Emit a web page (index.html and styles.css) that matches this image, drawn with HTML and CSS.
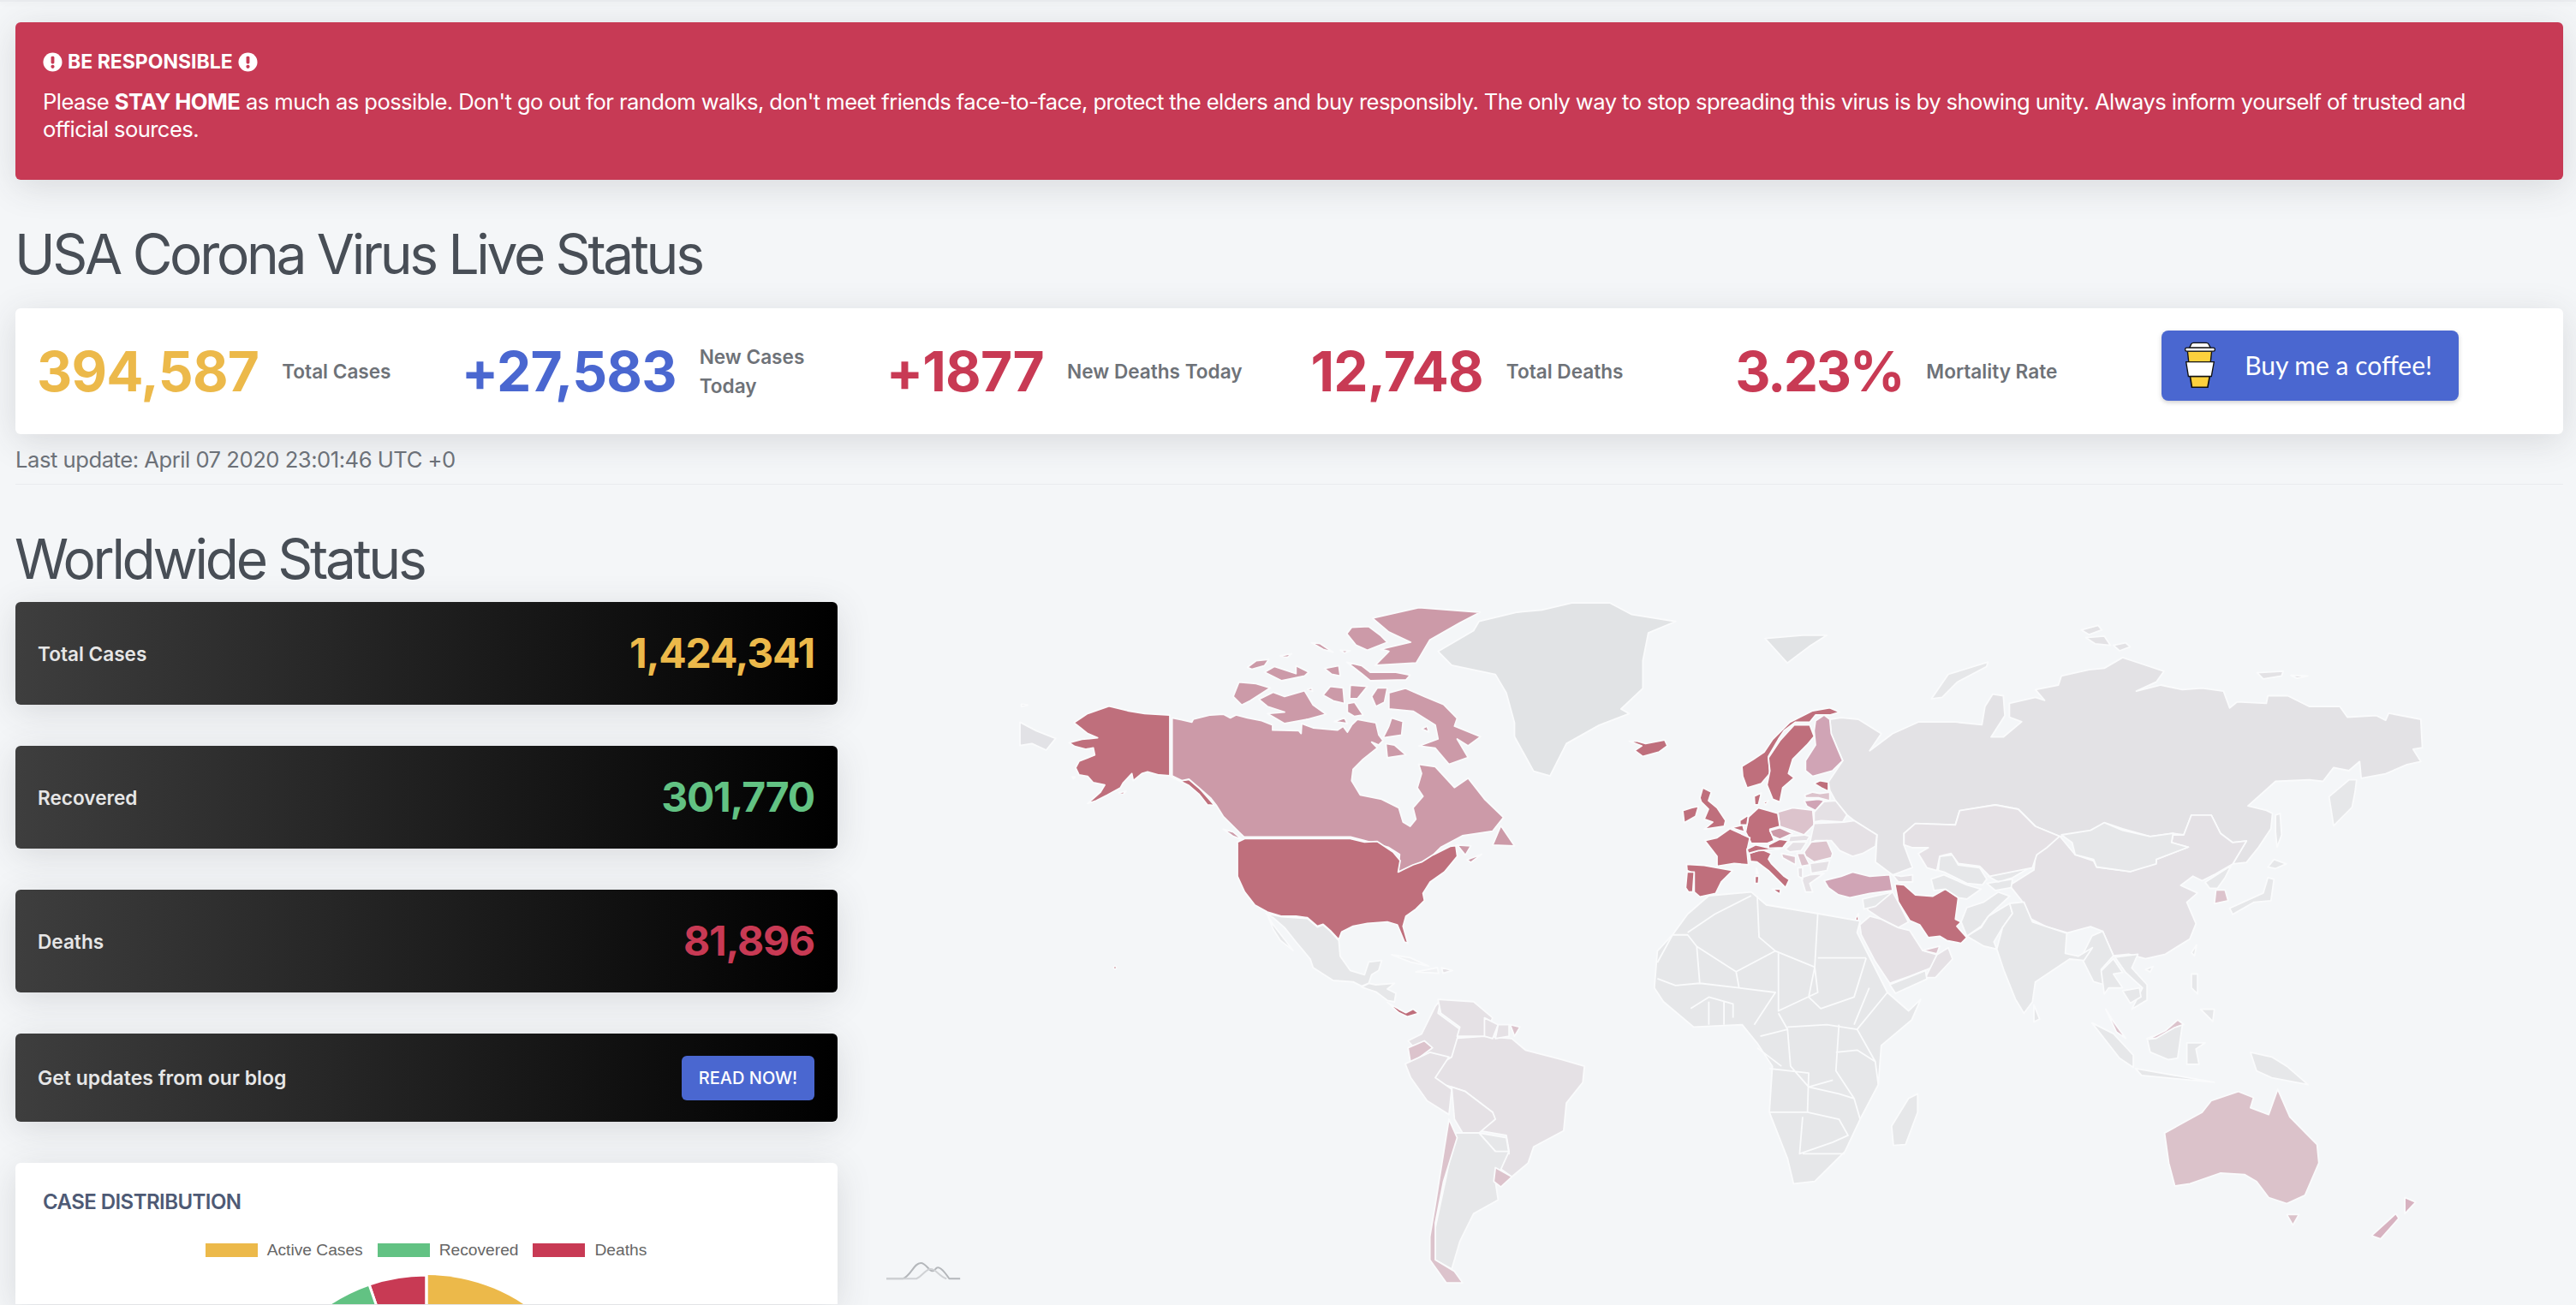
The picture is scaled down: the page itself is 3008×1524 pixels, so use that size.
FILE: index.html
```html
<!DOCTYPE html>
<html lang="en">
<head>
<meta charset="utf-8">
<title>Corona Virus Live Status</title>
<link rel="stylesheet" href="styles.css">
</head>
<body>
<div class="topline"></div>
<main class="page">
  <section class="alert">
    <h4 class="alert-title">
      <svg class="ex-icon" viewBox="0 0 24 24"><circle cx="12" cy="12" r="11.5" fill="#fff"/><rect x="10" y="5" width="4" height="9" rx="1.5" fill="#c73a55"/><circle cx="12" cy="17.5" r="2.2" fill="#c73a55"/></svg>
      <span>BE RESPONSIBLE</span>
      <svg class="ex-icon" viewBox="0 0 24 24"><circle cx="12" cy="12" r="11.5" fill="#fff"/><rect x="10" y="5" width="4" height="9" rx="1.5" fill="#c73a55"/><circle cx="12" cy="17.5" r="2.2" fill="#c73a55"/></svg>
    </h4>
    <p class="alert-body">Please <b>STAY HOME</b> as much as possible. Don't go out for random walks, don't meet friends face-to-face, protect the elders and buy responsibly. The only way to stop spreading this virus is by showing unity. Always inform yourself of trusted and official sources.</p>
  </section>

  <h1 class="title usa-title">USA Corona Virus Live Status</h1>
  <section class="stats">
    <div class="stat"><span class="num yellow">394,587</span><span class="lbl">Total Cases</span></div>
    <div class="stat"><span class="num blue">+27,583</span><span class="lbl">New Cases Today</span></div>
    <div class="stat"><span class="num red">+1877</span><span class="lbl">New Deaths Today</span></div>
    <div class="stat"><span class="num red">12,748</span><span class="lbl">Total Deaths</span></div>
    <div class="stat"><span class="num red pct">3.23%</span><span class="lbl">Mortality Rate</span></div>
    <div class="stat stat-btn">
      <a class="coffee" href="#">
        <svg class="cup" viewBox="150 85 110 160">
          <path d="M170,106 L176,93 Q178,89 184,89 L228,89 Q234,89 236,93 L243,106Z" fill="#fff" stroke="#111" stroke-width="4"/>
          <path d="M163,118 L247,118 L243,155 L167,155Z" fill="#fdd13d" stroke="#111" stroke-width="4"/>
          <path d="M172,205 L240,205 L233,243 L178,243Z" fill="#fdd13d" stroke="#111" stroke-width="5"/>
          <path d="M158,155 L255,155 L246,205 L166,205Z" fill="#fff" stroke="#111" stroke-width="4"/>
          <rect x="155" y="106" width="103" height="12" rx="5" fill="#fff" stroke="#111" stroke-width="4"/>
        </svg>
        <span>Buy me a coffee!</span>
      </a>
    </div>
  </section>
  <p class="updated">Last update: April 07 2020 23:01:46 UTC +0</p>
  <hr class="rule">

  <h1 class="title world-title">Worldwide Status</h1>
  <section class="world">
    <div class="side">
      <div class="dark-card"><span class="dc-label">Total Cases</span><span class="dc-value yellow">1,424,341</span></div>
      <div class="dark-card"><span class="dc-label">Recovered</span><span class="dc-value green">301,770</span></div>
      <div class="dark-card"><span class="dc-label">Deaths</span><span class="dc-value red">81,896</span></div>
      <div class="dark-card blog"><span class="dc-label">Get updates from our blog</span><a class="read" href="#">READ NOW!</a></div>
      <div class="chart-card">
        <h6 class="chart-title">CASE DISTRIBUTION</h6>
        <div class="legend">
          <span class="swatch bg-yellow"></span><span class="leg-text">Active Cases</span>
          <span class="swatch bg-green"></span><span class="leg-text">Recovered</span>
          <span class="swatch bg-red"></span><span class="leg-text">Deaths</span>
        </div>
        <svg class="pie" viewBox="0 0 424 424">
          <circle cx="212" cy="212" r="205" fill="#ecb94a"/>
          <path d="M212,212 L212,7 A205,205 0 0 0 145,18Z" fill="#c83a54" stroke="#fff" stroke-width="3"/>
          <path d="M212,212 L145,18 A205,205 0 0 0 80,55Z" fill="#62c283" stroke="#fff" stroke-width="3"/>
          <path d="M212,212 L212,7" stroke="#fff" stroke-width="3"/>
        </svg>
      </div>
    </div>

    <svg class="map" viewBox="1000 703 1993 821">
      <!-- zoom group A: North America west -->
      <g transform="translate(1180 690) scale(.33333)">
        <path class="c-gr" d="M33,460 L90,490 L158,517 L125,558 L75,535 L33,542Z"/>
        <path class="c-gr" d="M38,397 L60,400 L38,405Z"/>
        <path class="c-usa" d="M222,462 L270,430 L345,404 L410,420 L470,430 L558,435 L558,648 L520,645 L480,634 L460,640 L430,665 L425,640 L395,672 L385,690 L340,715 L300,735 L270,745 L315,705 L330,680 L290,672 L270,650 L240,645 L228,620 L240,597 L295,575 L290,550 L265,555 L225,545 L205,532 L250,520 L305,515 L270,500 L245,480Z"/>
        <path class="c-usa" d="M560,650 L600,665 L625,660 L660,690 L700,735 L715,752 L690,750 L660,712 L625,682Z"/>
        <path class="c-usa" d="M380,708 L405,702 L395,712Z M216,652 L226,652 L220,658Z"/>
        <path class="c-can" d="M566,445 L600,452 L635,460 L640,450 L700,435 L745,432 L770,445 L790,435 L830,445 L880,455 L918,470 L918,488 L1010,490 L1018,500 L1020,465 L1060,480 L1145,488 L1165,475 L1180,495 L1195,470 L1215,450 L1255,458 L1280,462 L1290,505 L1305,525 L1290,540 L1265,530 L1285,550 L1235,590 L1200,625 L1195,665 L1225,715 L1300,730 L1360,760 L1375,810 L1400,825 L1420,800 L1410,760 L1445,720 L1425,690 L1440,640 L1430,608 L1488,616 L1555,689 L1603,656 L1660,729 L1727,794 L1689,842 L1583,858 L1507,899 L1450,955 L1383,984 L1358,984 L1363,923 L1325,899 L1240,875 L1191,862 L818,862 L800,845 L745,790 L720,750 L700,725 L660,690 L625,660 L600,665 L566,648Z"/>
        <path class="c-can" d="M745,835 L780,845 L812,872 L780,860Z"/>
        <path class="c-can" d="M830,268 L860,245 L905,240 L890,262 L845,275Z"/>
        <path class="c-can" d="M890,285 L925,265 L1000,290 L1000,262 L1045,285 L1030,298 L950,315Z"/>
        <path class="c-can" d="M1178,250 L1230,262 L1260,285 L1350,285 L1400,295 L1385,312 L1260,315 L1230,290Z"/>
        <path class="c-can" d="M1100,272 L1150,262 L1155,298 L1125,292Z"/>
        <path class="c-can" d="M780,370 L800,320 L860,325 L910,340 L840,385 L810,400Z"/>
        <path class="c-can" d="M870,380 L920,355 L960,370 L1030,350 L1060,400 L1105,432 L1040,450 L960,465 L900,430 L960,425 L900,405Z"/>
        <path class="c-can" d="M1095,365 L1120,335 L1165,340 L1170,395 L1130,385Z"/>
        <path class="c-can" d="M1190,330 L1250,335 L1215,378 L1188,378Z"/>
        <path class="c-can" d="M1265,370 L1285,340 L1320,340 L1310,390 L1280,405Z"/>
        <path class="c-can" d="M1180,395 L1205,390 L1235,435 L1205,440 L1180,425Z"/>
        <path class="c-can" d="M1135,458 L1170,445 L1180,465Z"/>
        <path class="c-can" d="M1040,345 L1055,340 L1058,352Z M1055,182 L1085,185 L1130,215 L1095,205Z M1155,208 L1190,210 L1170,218Z M945,228 L985,220 L970,233Z"/>
        <path class="c-can" d="M1315,535 L1345,540 L1385,575 L1320,585Z"/>
        <path class="c-can" d="M1335,445 L1375,458 L1370,505 L1305,515 L1325,475Z"/>
        <path class="c-can" d="M1178,150 L1195,128 L1255,125 L1295,155 L1320,180 L1250,208 L1210,190Z"/>
        <path class="c-usa" d="M820,868 L1190,868 L1240,880 L1285,878 L1340,915 L1365,945 L1358,985 L1410,960 L1440,950 L1480,925 L1540,895 L1560,893 L1565,930 L1520,985 L1470,1020 L1445,1060 L1450,1085 L1420,1115 L1385,1140 L1375,1175 L1392,1235 L1380,1230 L1355,1170 L1320,1160 L1250,1165 L1200,1175 L1160,1195 L1150,1222 L1120,1190 L1095,1168 L1075,1175 L1040,1145 L1000,1140 L950,1140 L900,1125 L855,1100 L820,1055 L795,1000 L795,950 L795,880Z"/>
        <circle class="c-usa" cx="366" cy="1320" r="5"/>
        <path class="c-af" d="M895,1130 L950,1142 L1040,1148 L1075,1178 L1095,1170 L1120,1192 L1150,1225 L1155,1280 L1190,1330 L1240,1345 L1255,1300 L1300,1295 L1290,1330 L1265,1345 L1255,1375 L1230,1385 L1200,1370 L1130,1365 L1060,1320 L1050,1290 L1000,1230 L960,1180 L920,1145Z"/>
        <path class="c-af" d="M900,1135 L920,1170 L990,1260 L945,1225 L920,1185Z"/>
        <path class="c-af" d="M1230,1388 L1255,1375 L1280,1380 L1345,1375 L1320,1395 L1350,1410 L1345,1440 L1320,1435 L1280,1405 L1250,1395Z"/>
        <path class="c-usa" d="M1320,1442 L1360,1465 L1385,1478 L1410,1465 L1430,1480 L1390,1492 L1360,1478Z"/>
        <path class="c-br" d="M1510,1320 L1548,1330 L1515,1340Z"/>
        <path class="c-pale" d="M1335,1275 L1400,1285 L1465,1315 L1400,1300Z M1420,1335 L1495,1320 L1500,1340Z"/>
      </g>

      <!-- zoom group B: Arctic, Greenland, Atlantic, South America -->
      <g transform="translate(1000 680) scale(.63776 .53821)">
        <path class="c-gl" d="M1065,150 L1130,105 L1140,85 L1210,65 L1255,60 L1310,45 L1380,45 L1420,70 L1500,85 L1450,110 L1440,170 L1440,230 L1400,275 L1415,285 L1360,310 L1300,350 L1270,420 L1240,410 L1205,335 L1205,305 L1190,240 L1170,200 L1090,180Z"/>
        <path class="c-can" d="M945,78 L1030,55 L1142,65 L1105,88 L1050,125 L1025,175 L950,180 L975,150 L960,145 L1015,130 L975,108Z"/>
        <path class="c-can" d="M975,240 L1005,230 L1040,248 L1075,265 L1100,295 L1095,312 L1143,335 L1120,355 L1100,340 L1120,380 L1085,395 L1060,360 L1030,355 L1065,340 L1060,310 L1020,280 L975,275Z"/>
        <path class="c-can" d="M1180,528 L1205,572 L1165,570Z M1100,570 L1125,572 L1115,592Z M1118,602 L1145,590 L1125,608Z M1035,318 L1045,312 L1048,325Z"/>
        <path class="c-usa" d="M1415,345 L1430,345 L1445,350 L1480,342 L1485,355 L1470,368 L1440,378 L1425,365 L1438,355Z"/>
        <path class="c-br" d="M1090,990 L1150,985 L1200,990 L1225,1015 L1290,1035 L1333,1050 L1330,1085 L1300,1130 L1295,1190 L1240,1225 L1230,1260 L1200,1290 L1170,1265 L1195,1235 L1190,1200 L1140,1190 L1165,1150 L1115,1105 L1090,1095 L1060,1085 L1058,1055 L1085,1030Z"/>
        <path class="c-br" d="M1035,980 L1060,920 L1070,905 L1065,935 L1105,970 L1090,1030 L1055,1055 L1010,995Z"/>
        <path class="c-br" d="M1065,905 L1130,910 L1165,945 L1150,985 L1100,985 L1105,965 L1070,935Z"/>
        <path class="c-br" d="M1150,945 L1175,960 L1165,990 L1150,985Z M1175,960 L1195,960 L1195,985 L1170,990Z"/>
        <path class="c-mid" d="M1197,960 L1215,965 L1205,985Z"/>
        <path class="c-mid" d="M1010,1010 L1040,995 L1055,1010 L1015,1045Z"/>
        <path class="c-br" d="M1005,1045 L1050,1020 L1085,1030 L1060,1075 L1090,1100 L1085,1155 L1045,1125 L1015,1075Z"/>
        <path class="c-br" d="M1090,1095 L1115,1105 L1165,1150 L1170,1165 L1140,1195 L1110,1195 L1095,1165Z"/>
        <path class="c-af" d="M1140,1195 L1190,1205 L1195,1240 L1170,1235Z"/>
        <path class="c-af" d="M1095,1195 L1140,1195 L1170,1235 L1195,1235 L1170,1300 L1175,1340 L1130,1370 L1105,1430 L1090,1490 L1060,1470 L1060,1400 L1080,1290Z"/>
        <path class="c-mid" d="M1085,1165 L1100,1205 L1075,1300 L1060,1390 L1060,1470 L1095,1495 L1110,1520 L1080,1520 L1050,1470 L1050,1420 L1060,1350Z"/>
        <path class="c-mid" d="M1170,1270 L1200,1290 L1180,1312 L1167,1300Z"/>
        <path class="logo" d="M55,1511 L85,1511 C100,1505 105,1477 118,1477 C130,1477 135,1505 145,1490 C150,1482 158,1490 170,1511 L190,1511"/>
        <path class="logo-b" d="M55,1511 L110,1511 C122,1505 125,1492 135,1490 C145,1488 150,1505 165,1511"/>
      </g>

      <!-- zoom group C: Russia, China, East Asia -->
      <g transform="translate(2300 700) scale(.35714)">
        <path class="c-ru" d="M-420,387 L-364,392 L-289,439 L-327,495 L-252,439 L-168,401 L-47,401 L40,410 L50,350 L75,310 L110,315 L115,380 L70,450 L110,450 L170,400 L130,385 L130,340 L215,320 L245,330 L215,295 L290,280 L300,250 L390,230 L440,225 L500,190 L560,210 L635,235 L610,270 L545,300 L625,280 L695,295 L760,290 L830,300 L850,355 L875,335 L970,340 L975,315 L1040,315 L1110,350 L1210,350 L1235,385 L1330,380 L1360,395 L1370,372 L1475,392 L1480,485 L1450,490 L1475,530 L1430,540 L1360,570 L1280,585 L1275,530 L1240,560 L1190,550 L1155,595 L1110,590 L1000,595 L910,675 L970,690 L990,700 L985,750 L945,810 L905,860 L860,865 L905,790 L860,795 L820,765 L790,705 L725,705 L700,770 L665,765 L590,775 L500,750 L440,730 L395,760 L294,775 L215,742 L159,686 L84,672 L-33,691 L-47,737 L-177,733 L-215,765 L-215,803 L-187,877 L-252,901 L-308,859 L-303,770 L-378,723 L-401,705 L-439,658 L-457,625 L-462,597 L-415,527 L-429,495 L-453,439 L-457,392Z"/>
        <path class="c-af" d="M-125,325 L-70,245 L60,205 L55,220 L-40,270 L-90,320Z"/>
        <path class="c-gl" d="M-669,128 L-546,117 L-467,117 L-526,155 L-596,208Z"/>
        <path class="c-ru" d="M365,100 L420,85 L432,100 L390,115Z M380,125 L440,120 L460,150 L410,145Z M470,150 L510,142 L525,155 L490,168Z M940,240 L1025,235 L1020,250 L960,260Z M1050,248 L1105,250 L1070,258Z"/>
        <path class="c-af" d="M1175,645 L1240,590 L1265,590 L1260,630 L1250,680 L1190,740Z"/>
        <path class="c-af" d="M1000,705 L1015,700 L1020,770 L1005,810 L1000,760Z"/>
        <path class="c-af" d="M850,1010 L960,960 L975,910 L995,915 L985,985 L930,990 L860,1030Z M995,850 L1035,865 L1000,880 L975,875Z"/>
        <path class="c-cn" d="M130,935 L210,885 L215,840 L245,800 L295,775 L345,835 L405,855 L415,875 L525,890 L610,860 L610,850 L715,810 L660,795 L665,770 L700,770 L725,705 L790,705 L820,765 L860,795 L905,790 L860,865 L800,900 L760,920 L730,905 L690,935 L745,960 L710,990 L740,1060 L720,1110 L640,1160 L575,1175 L520,1160 L470,1165 L435,1085 L395,1070 L320,1090 L250,1070 L190,1040 L170,985Z"/>
        <path class="c-af" d="M300,770 L395,755 L440,730 L500,755 L590,775 L665,765 L660,795 L715,810 L610,850 L610,865 L525,890 L415,875 L405,850 L345,835 L335,795Z"/>
        <path class="c-af" d="M770,925 L855,870 L835,910 L810,945 L785,945Z"/>
        <path class="c-mid" d="M805,950 L835,950 L845,985 L800,995Z"/>
        <path class="c-af" d="M725,1155 L742,1130 L735,1165Z M575,1210 L600,1200 L590,1218Z"/>
        <path class="c-af" d="M210,1065 L310,1090 L305,1115 L240,1095Z"/>
        <path class="c-af" d="M365,1170 L400,1100 L435,1085 L470,1165 L430,1210 L440,1260 L405,1250Z"/>
        <path class="c-af" d="M430,1215 L470,1175 L500,1220 L470,1225 L500,1270 L455,1270 L440,1290Z"/>
        <path class="c-af" d="M475,1170 L550,1160 L530,1205 L580,1260 L580,1310 L530,1340 L565,1270 L510,1220Z"/>
        <path class="c-af" d="M500,1280 L555,1270 L560,1300 L525,1320Z"/>
        <path class="c-mid" d="M445,1340 L470,1380 L510,1435 L480,1415Z"/>
        <path class="c-af" d="M400,1385 L470,1420 L535,1490 L535,1530 L490,1500Z"/>
        <path class="c-af" d="M580,1435 L640,1415 L690,1380 L695,1395 L680,1500 L650,1505 L590,1480Z"/>
        <path class="c-mid" d="M585,1438 L640,1410 L680,1375 L700,1390 L670,1400 L610,1435Z"/>
        <path class="c-af" d="M710,1450 L770,1450 L740,1470 L750,1520 L710,1520Z"/>
        <path class="c-af" d="M725,1225 L745,1225 L745,1290 L725,1270Z M755,1340 L800,1340 L795,1380Z"/>
      </g>

      <!-- zoom group D: Europe, Middle East, Central Asia, India -->
      <g transform="translate(1950 800) scale(.33333)">
        <path class="c-usa" d="M252,285 L290,262 L330,235 L360,190 L420,130 L500,90 L560,80 L595,95 L560,105 L510,105 L490,130 L440,130 L400,160 L380,190 L345,250 L350,310 L320,345 L270,360 L255,320Z"/>
        <path class="c-usa" d="M345,255 L385,195 L435,140 L490,140 L505,180 L480,210 L430,260 L415,310 L435,325 L395,360 L385,410 L360,400 L340,350 L350,300Z"/>
        <path class="c-tr" d="M510,125 L540,105 L560,120 L565,170 L590,230 L605,265 L570,300 L500,320 L475,300 L475,265 L510,210 L505,160Z"/>
        <path class="c-usa" d="M295,390 L320,378 L310,420 L297,420Z M330,410 L345,405 L335,420Z"/>
        <path class="c-usa" d="M505,345 L525,335 L555,340 L555,372 L530,360Z"/>
        <path class="c-mid" d="M472,385 L500,375 L525,380 L560,375 L560,405 L520,395 L475,395Z"/>
        <path class="c-tr" d="M470,405 L520,400 L540,405 L510,440 L480,425Z"/>
        <path class="c-br" d="M505,445 L540,408 L580,405 L620,455 L605,480 L530,475 L505,480Z"/>
        <path class="c-mid" d="M378,445 L430,430 L500,438 L505,490 L470,525 L430,510 L385,495Z"/>
        <path class="c-usa" d="M275,462 L310,430 L345,440 L378,450 L385,495 L350,505 L365,545 L340,555 L285,555 L265,515Z"/>
        <path class="c-usa" d="M245,475 L275,455 L270,490 L245,490Z M215,500 L255,490 L262,515Z"/>
        <path class="c-usa" d="M122,545 L165,535 L210,503 L280,535 L270,580 L275,630 L225,625 L165,635 L165,600Z"/>
        <path class="c-usa" d="M105,395 L115,360 L145,375 L135,405 L165,430 L195,475 L190,495 L120,505 L150,480 L120,470 L135,435 L110,410Z"/>
        <path class="c-usa" d="M45,440 L75,430 L100,425 L90,460 L50,482Z"/>
        <path class="c-usa" d="M58,628 L120,632 L220,650 L180,690 L160,730 L105,742 L85,725 L85,660 L60,650Z"/>
        <path class="c-usa" d="M60,655 L85,655 L80,725 L65,725 L55,710Z"/>
        <path class="c-usa" d="M278,590 L320,575 L355,590 L345,610 L355,625 L400,670 L418,682 L405,710 L385,690 L345,650 L305,620 L282,618Z"/>
        <path class="c-usa" d="M270,575 L300,560 L345,570 L405,565 L380,575 L310,580 L275,590Z"/>
        <path class="c-can" d="M350,510 L385,500 L430,520 L385,540 L360,530Z"/>
        <path class="c-usa" d="M345,560 L385,540 L415,545 L395,570 L345,572Z"/>
        <path class="c-usa" d="M298,670 L312,670 L310,695 L298,695Z M303,642 L309,660 L303,660Z M358,715 L388,715 L385,733Z"/>
        <path class="c-br" d="M495,530 L505,485 L610,480 L645,475 L725,525 L720,565 L675,590 L640,600 L595,580 L565,545 L510,545 L490,555Z"/>
        <path class="c-br" d="M420,530 L470,525 L490,530 L480,545 L415,550Z M405,575 L430,550 L480,550 L460,580 L420,585Z"/>
        <path class="c-mid" d="M470,585 L495,550 L550,545 L570,590 L565,605 L505,620 L475,600Z"/>
        <path class="c-br" d="M490,625 L560,615 L550,650 L495,660Z"/>
        <path class="c-mid" d="M445,590 L470,590 L490,630 L460,635Z M390,590 L440,600 L440,630 L395,605Z"/>
        <path class="c-br" d="M460,675 L490,665 L540,660 L490,695 L500,725 L475,725Z M448,640 L465,640 L465,680 L450,670Z"/>
        <path class="c-tr" d="M540,685 L600,670 L640,655 L700,670 L770,665 L780,720 L700,730 L630,745 L590,735 L555,710Z"/>
        <path class="c-br" d="M780,665 L810,670 L850,665 L850,690 L800,690Z"/>
        <path class="c-usa" d="M788,697 L820,700 L860,735 L920,740 L965,715 L1010,745 L1000,820 L1020,830 L1005,845 L1040,885 L1020,905 L970,895 L945,880 L905,885 L875,840 L840,825 L800,760Z"/>
        <path class="c-usa" d="M650,820 L660,800 L660,835Z"/>
        <path class="c-br" d="M680,760 L780,725 L805,770 L835,830 L800,850 L740,820 L695,790Z"/>
        <path class="c-af" d="M675,750 L780,725 L720,775 L680,785Z"/>
        <path class="c-br" d="M665,840 L700,810 L740,820 L800,850 L840,860 L885,930 L935,945 L930,985 L840,1020 L770,1045 L720,970 L670,875Z"/>
        <path class="c-br" d="M935,945 L975,920 L990,960 L930,1025 L895,1025Z"/>
        <path class="c-af" d="M770,1050 L895,1000 L900,1030 L790,1080Z"/>
        <path class="c-mid" d="M885,930 L945,915 L935,942Z"/>
        <path class="c-af" d="M1040,880 L1090,850 L1115,810 L1190,765 L1200,800 L1165,850 L1135,900 L1145,925 L1100,915Z"/>
        <path class="c-af" d="M1020,830 L1040,780 L1100,760 L1150,725 L1190,740 L1115,810 L1090,845 L1040,880Z"/>
        <path class="c-af" d="M915,680 L960,665 L1040,700 L1090,715 L1040,750 L1010,745 L965,715 L925,720Z"/>
        <path class="c-af" d="M945,600 L990,595 L1010,630 L1085,640 L1110,680 L1095,700 L1040,695 L960,655 L940,650Z"/>
        <path class="c-af" d="M1115,670 L1260,640 L1200,675 L1150,690Z M1110,695 L1200,680 L1195,710 L1140,720Z"/>
        <path class="c-br" d="M820,520 L860,485 L1000,490 L1015,440 L1140,420 L1220,435 L1280,495 L1365,530 L1320,570 L1285,595 L1270,640 L1120,670 L1085,635 L1010,625 L985,590 L945,600 L935,650 L900,640 L870,590 L905,570 L850,570 L820,560Z"/>
        <path class="c-af" d="M1190,765 L1240,760 L1270,830 L1390,870 L1385,940 L1430,950 L1480,920 L1450,965 L1400,960 L1280,1040 L1270,1110 L1240,1150 L1210,1100 L1170,1000 L1145,925 L1165,850 L1200,800Z"/>
        <path class="c-af" d="M1275,1120 L1295,1170 L1275,1180Z"/>
      </g>

      <!-- zoom group E: Africa, Oceania -->
      <g transform="translate(1900 680) scale(.70671 .53821)">
        <path class="c-af" d="M100,720 L135,680 L205,672 L230,700 L320,720 L385,735 L380,760 L430,890 L465,930 L485,905 L470,950 L420,1005 L415,1090 L385,1165 L360,1235 L310,1300 L275,1305 L265,1250 L235,1150 L240,1050 L215,1000 L190,960 L110,965 L60,910 L45,880 L50,800 L75,765Z"/>
        <path class="seam" d="M100,760 L145,720 L205,680 M50,825 L75,765 L100,765 L115,790 L120,870 M115,790 L180,845 L245,800 L218,770 L215,680 M245,800 L310,835 L315,720 M315,815 L395,815 M310,835 L315,890 L250,930 L250,805 M180,845 L185,880 L120,870 L80,875 L50,860 M185,880 L245,890 L210,960 M250,935 L265,970 L220,985 M265,965 L330,960 L380,970 L430,890 M310,835 L300,900 L320,925 L375,900 L395,815 M375,960 L400,880 M380,970 L410,1040 L415,1090 M345,1020 L380,1015 L410,1040 M350,960 L345,1060 L375,1120 M265,970 L270,1050 L300,1095 L340,1080 M215,1010 L255,1050 M235,1055 L300,1065 L298,1150 L235,1150 M300,1095 L350,1110 L375,1120 L385,1165 M298,1150 L350,1165 L365,1200 L340,1215 L285,1240 L290,1160 M360,1240 L290,1240 M105,925 L135,900 L175,915 L175,945 M135,910 L135,960 M160,910 L160,960"/>
        <path class="c-af" d="M465,1120 L480,1110 L480,1150 L460,1220 L440,1222 L437,1180Z"/>
        <path class="c-af" d="M1030,1020 L1065,1030 L1090,1050 L1125,1090 L1065,1075 L1040,1060Z"/>
        <path class="c-af" d="M840,1055 L940,1078 L970,1085 L850,1070Z"/>
        <path class="c-au" d="M888,1195 L950,1150 L965,1125 L1010,1105 L1035,1118 L1030,1140 L1060,1155 L1075,1100 L1095,1160 L1140,1220 L1143,1260 L1120,1330 L1090,1348 L1060,1335 L1040,1300 L1020,1285 L980,1282 L930,1305 L905,1310 L895,1260Z"/>
        <path class="c-au" d="M1090,1372 L1110,1372 L1100,1395Z"/>
        <path class="c-nz" d="M1285,1335 L1303,1345 L1285,1370Z M1270,1370 L1275,1380 L1245,1425 L1230,1418Z"/>
      </g>
    </svg>
  </section>
</main>
</body>
</html>
```
FILE: styles.css
```css
* { box-sizing: border-box; }
html, body { margin: 0; height: 100%; }
body {
  height: 100vh;
  overflow: hidden;
  background: #f4f6f8;
  font-family: Inter, "Liberation Sans", sans-serif;
  color: #4a5058;
}
.topline { height: 2px; background: #e9ebee; box-shadow: 0 1px 6px rgba(58,59,69,.08); }
.page { padding: 24px 15px 0 18px; }

.alert {
  height: 184px;
  padding: 32px 32px 0;
  background: #c73a55;
  border-radius: 6px;
  color: #fff;
  box-shadow: 0 8px 40px rgba(58,59,69,.15);
}
.alert-title {
  display: flex;
  align-items: center;
  gap: 6px;
  height: 28px;
  margin: 0 0 17px;
  font-size: 23px;
  font-weight: 700;
  line-height: 28px;
}
.ex-icon { width: 23px; height: 23px; flex: none; }
.alert-body { margin: 0; font-size: 25.6px; line-height: 32px; letter-spacing: -0.57px; }
.alert-body b { font-weight: 700; }

.title { margin: 0 0 0 -1px; font-size: 64px; font-weight: 400; line-height: 77px; color: #484e56; letter-spacing: -3.3px; }
.usa-title { margin-top: 48px; margin-bottom: 25px; }
.world-title { margin-top: 48px; margin-bottom: 12px; }

.stats {
  display: grid;
  grid-template-columns: repeat(6, 1fr);
  align-items: center;
  height: 147px;
  background: #fff;
  border-radius: 6px;
  box-shadow: 0 8px 40px rgba(58,59,69,.15);
}
.stat { display: flex; align-items: center; gap: 27px; padding: 0 27px 0 25px; min-width: 0; }
.num { flex: none; font-size: 64px; font-weight: 700; line-height: 77px; letter-spacing: -0.8px; }
.pct { letter-spacing: -2.4px; }
.lbl { font-size: 22.6px; font-weight: 600; line-height: 34px; color: #6e7278; }
.stat-btn { align-self: start; padding: 26px 27px 0; }
.coffee {
  display: flex;
  align-items: center;
  gap: 34px;
  width: 347px;
  height: 82px;
  padding-left: 26px;
  padding-bottom: 2px;
  background: #4a67d0;
  border-radius: 8px;
  color: #fff;
  font-family: Lato, sans-serif;
  font-size: 30px;
  text-decoration: none;
  box-shadow: 0 2px 5px rgba(58,59,69,.25);
}
.cup { width: 37px; height: 54px; flex: none; }

.yellow { color: #ecb94a; }
.blue { color: #4a67d0; }
.red { color: #c83a54; }
.green { color: #62c283; }
.bg-yellow { background: #ecb94a; }
.bg-green { background: #62c283; }
.bg-red { background: #c83a54; }

.updated { margin: 14px 0 0; font-size: 25.6px; line-height: 32px; letter-spacing: -0.47px; color: #6c7178; }
.rule { margin: 12px 0 0; height: 1px; border: 0; background: #e9ebee; }

.world { display: grid; grid-template-columns: 960px 1fr; column-gap: 22px; }
.side { display: flex; flex-direction: column; gap: 48px; min-width: 0; }
.dark-card {
  display: flex;
  align-items: center;
  justify-content: space-between;
  height: 120px;
  padding: 0 27px 0 26px;
  background: linear-gradient(90deg, #3e3e3e, #000);
  border-radius: 6px;
  box-shadow: 0 8px 40px rgba(58,59,69,.15);
}
.blog { height: 103px; }
.dc-label { font-size: 22.6px; font-weight: 600; color: #e6e6e6; }
.blog .dc-label { font-size: 23px; }
.dc-value { font-size: 48px; font-weight: 700; line-height: 58px; letter-spacing: -1.2px; }
.read {
  display: flex;
  align-items: center;
  justify-content: center;
  width: 155px;
  height: 52px;
  background: #4a67d0;
  border-radius: 6px;
  color: #fff;
  font-size: 20px;
  font-weight: 500;
  text-decoration: none;
}
.chart-card {
  height: 165px;
  overflow: hidden;
  padding: 32px 32px 0;
  background: #fff;
  border-radius: 6px 6px 0 0;
  box-shadow: 0 8px 40px rgba(58,59,69,.15);
}
.chart-title { margin: 0; font-size: 24px; font-weight: 600; line-height: 28px; letter-spacing: -0.55px; color: #4e5a75; }
.legend { display: flex; align-items: center; justify-content: center; margin-top: 34px; height: 16px; padding-right: 1px; }
.swatch { width: 61px; height: 16px; margin-right: 11px; }
.leg-text { margin-right: 17px; font-family: "Liberation Sans", sans-serif; font-size: 19.2px; line-height: 24px; color: #666; }
.leg-text:last-child { margin-right: 0; }
.pie { display: block; width: 424px; height: 424px; margin: 14px auto 0; }

.map { display: block; width: 1993px; height: 821px; }
.map path, .map circle {
  stroke: #fafbfc;
  stroke-width: 1.8px;
  stroke-linejoin: round;
  vector-effect: non-scaling-stroke;
}
.c-usa { fill: #bf6f7c; }
.c-can { fill: #cc9aa8; }
.c-tr { fill: #d0a4b5; }
.c-mid { fill: #dcc3cc; }
.c-au { fill: #dbc2ca; }
.c-nz { fill: #d7b2c0; }
.c-br { fill: #e5e1e5; }
.c-cn { fill: #e4e1e5; }
.c-ru { fill: #e3e2e5; }
.c-gr { fill: #e2e2e6; }
.c-gl { fill: #e1e3e5; }
.c-af { fill: #e6e7e9; }
.c-pale { fill: #f0f1f3; }
.map .seam { fill: none; }
.map .logo { fill: none; stroke: #b4b7bb; stroke-width: 2px; }
.map .logo-b { fill: none; stroke: #d0d2d5; stroke-width: 2px; }
```
